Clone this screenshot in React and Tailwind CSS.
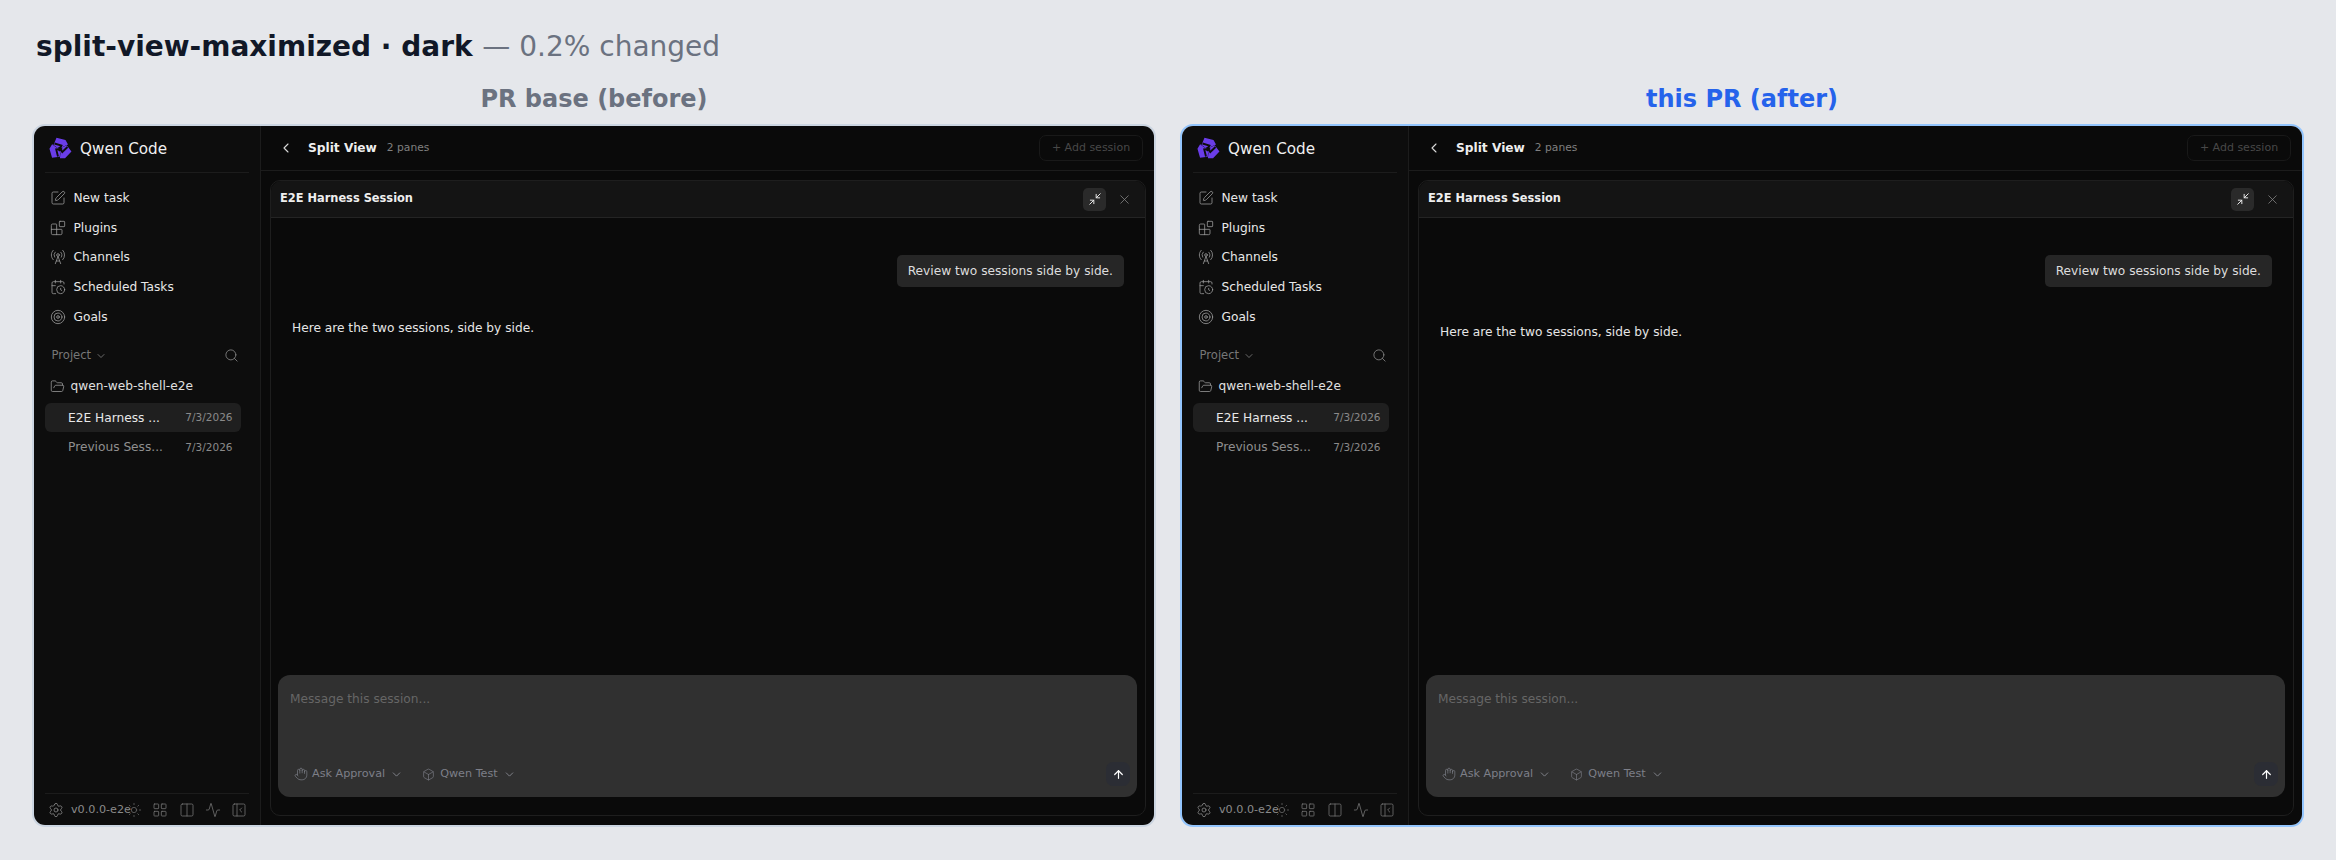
import {
  Activity,
  ArrowUp,
  Blocks,
  Box,
  CalendarClock,
  ChevronDown,
  ChevronLeft,
  Columns2,
  FolderOpen,
  Hand,
  LayoutGrid,
  Minimize2,
  PanelLeftClose,
  RadioTower,
  Search,
  Settings,
  SquarePen,
  Sun,
  Target,
  X,
} from "lucide-react";

const navItems = [
  { label: "New task", icon: SquarePen },
  { label: "Plugins", icon: Blocks },
  { label: "Channels", icon: RadioTower },
  { label: "Scheduled Tasks", icon: CalendarClock },
  { label: "Goals", icon: Target },
];

function Logo() {
  const blade = "M8.5 0.8 L17.5 3 L20 7.5 L15.5 9.5 L12 12.5 L5.5 8 Z";
  const slit = "M6.5 6.5 L13.5 8.5 L11 14";
  return (
    <svg viewBox="0 0 24 24" className="w-[24px] h-[24px]">
      {[0, 120, 240].map((deg) => (
        <path key={deg} d={blade} fill="#6a3de8" transform={`rotate(${deg} 12 12)`} />
      ))}
      {[0, 120, 240].map((deg) => (
        <path key={deg} d={slit} fill="none" stroke="#0d0d0d" strokeWidth="1.9" transform={`rotate(${deg} 12 12)`} />
      ))}
    </svg>
  );
}

function Sidebar() {
  return (
    <aside className="w-[227px] shrink-0 flex flex-col bg-[#0d0d0d] border-r border-[#1c1c1c]">
      <div className="mx-[11px] h-[47px] flex items-center gap-[8px] pl-[3px] border-b border-[#1c1c1c]">
        <Logo />
        <span className="text-[15.2px] text-[#f0f0f0]">Qwen Code</span>
      </div>
      <nav className="mt-[10px] flex flex-col">
        {navItems.map(({ label, icon: Icon }) => (
          <div key={label} className="h-[29.8px] flex items-center gap-[7.5px] pl-[16px] text-[12.2px] text-[#e8e8e8]">
            <Icon size={16} strokeWidth={1.2} className="text-[#9a9a9a]" />
            <span>{label}</span>
          </div>
        ))}
      </nav>
      <div className="mt-[12px] h-[24px] flex items-center justify-between pl-[17.5px] pr-[21px] text-[11.6px] text-[#777777]">
        <span className="flex items-center gap-[4px]">
          Project <ChevronDown size={12} strokeWidth={1.5} className="text-[#8a8a8a]" />
        </span>
        <Search size={15} strokeWidth={1.3} className="text-[#8a8a8a]" />
      </div>
      <div className="mt-[6.5px] h-[24px] flex items-center gap-[5.5px] pl-[16px] text-[12.2px] text-[#e0e0e0]">
        <FolderOpen size={15} strokeWidth={1.2} className="text-[#a0a0a0]" />
        <span>qwen-web-shell-e2e</span>
      </div>
      <div className="mt-[5px] mx-[11px] w-[196px] h-[29px] rounded-[6px] bg-[#1f1f1f] flex items-center justify-between pl-[23px] pr-[8.5px]">
        <span className="text-[12.2px] text-[#e8e8e8]">E2E Harness ...</span>
        <span className="text-[10.5px] text-[#8a8a8a]">7/3/2026</span>
      </div>
      <div className="mx-[11px] w-[196px] h-[30px] flex items-center justify-between pl-[23px] pr-[8.5px]">
        <span className="text-[12.2px] text-[#8f8f8f]">Previous Sess...</span>
        <span className="text-[10.5px] text-[#8a8a8a]">7/3/2026</span>
      </div>
      <div className="mt-auto mx-[11px] h-[32px] flex items-center border-t border-[#1c1c1c] pl-[3px] text-[#757575]">
        <Settings size={16} strokeWidth={1.2} className="text-[#8a8a8a]" />
        <span className="ml-[7px] w-[59px] pt-[2px] whitespace-nowrap text-[11.2px] text-[#8a8a8a]">v0.0.0-e2e</span>
        <Sun size={16} strokeWidth={1} className="ml-[-4px] text-[#777777]" />
        <LayoutGrid size={16} strokeWidth={1.2} className="ml-[10px]" />
        <Columns2 size={16} strokeWidth={1.2} className="ml-[11px]" />
        <Activity size={16} strokeWidth={1.2} className="ml-[10px]" />
        <PanelLeftClose size={16} strokeWidth={1.2} className="ml-[10px]" />
      </div>
    </aside>
  );
}

function Composer() {
  return (
    <div className="ml-[7px] mr-[8px] mb-[18px] h-[122px] rounded-[12px] bg-[#303030] flex flex-col pl-[12px] pr-[7px]">
      <div className="mt-[16px] text-[12.2px] leading-[16px] text-[#666666]">Message this session...</div>
      <div className="mt-auto mb-[11px] flex items-center text-[11.2px] text-[#7d7f88]">
        <Hand size={14} strokeWidth={1.2} className="ml-[4px]" />
        <span className="ml-[4px]">Ask Approval</span>
        <ChevronDown size={13} strokeWidth={1.6} className="ml-[5px] text-[#8a8c94]" />
        <Box size={13} strokeWidth={1.2} className="ml-[19px]" />
        <span className="ml-[5px]">Qwen Test</span>
        <ChevronDown size={13} strokeWidth={1.6} className="ml-[5px] text-[#8a8c94]" />
        <div className="ml-auto w-[24px] h-[24px] rounded-[7px] bg-[#2b2d34] flex items-center justify-center">
          <ArrowUp size={13} strokeWidth={2.2} className="text-white" />
        </div>
      </div>
    </div>
  );
}

function Panel({ after }) {
  return (
    <div className={`h-[703px] rounded-[13px] border-2 overflow-hidden flex ${after ? "border-[#93c5fd]" : "border-[#cbd5e1]"}`}>
      <Sidebar />
      <main className="flex-1 min-w-0 flex flex-col bg-[#0a0a0a]">
        <header className="h-[45px] shrink-0 flex items-center pl-[17px] pr-[11px] border-b border-[#1c1c1c]">
          <ChevronLeft size={16} strokeWidth={1.6} className="text-[#d8d8d8]" />
          <span className="ml-[14px] text-[12.2px] font-bold text-[#eeeeee]">Split View</span>
          <span className="ml-[10px] text-[10.7px] text-[#808080]">2 panes</span>
          <div className="ml-auto w-[104px] h-[26px] rounded-[7px] border border-[#191919] flex items-center justify-center text-[11px] text-[#484848]">
            + Add session
          </div>
        </header>
        <section className="mt-[9px] ml-[9px] mr-[8px] mb-[9px] flex-1 min-h-0 flex flex-col rounded-[10px] border border-[#1e1e1e]">
          <div className="h-[37px] shrink-0 flex items-center pl-[9px] pr-[13px] bg-[#141414] rounded-t-[10px] border-b border-[#242424]">
            <span className="text-[11.4px] font-bold text-[#eeeeee]">E2E Harness Session</span>
            <div className="ml-auto w-[23px] h-[23px] rounded-[5px] bg-[#2a2a2a] flex items-center justify-center">
              <Minimize2 size={14} strokeWidth={1.7} className="text-[#e8e8e8]" />
            </div>
            <X size={15} strokeWidth={1.2} className="ml-[11px] text-[#8a8a8a]" />
          </div>
          <div className="flex-1 min-h-0 flex flex-col pt-[37px]">
            <div className="self-end mr-[21px] h-[32px] rounded-[5px] bg-[#262626] px-[11px] flex items-center text-[12.2px] text-[#dddddd]">
              Review two sessions side by side.
            </div>
            <p className={`ml-[21px] text-[12.2px] leading-[18px] text-[#e6e6e6] ${after ? "mt-[36px]" : "mt-[32px]"}`}>
              Here are the two sessions, side by side.
            </p>
          </div>
          <Composer />
        </section>
      </main>
    </div>
  );
}

export default function App() {
  return (
    <div className="w-[2336px] h-[860px] bg-[#e5e7eb] px-[32px] pt-[28px] font-['DejaVu_Sans',sans-serif]">
      <h1 className="pl-[4px] text-[28px] leading-[38px] font-bold text-[#111827]">
        split-view-maximized · dark <span className="font-normal text-[#6b7280]">— 0.2% changed</span>
      </h1>
      <div className="mt-[18px] grid grid-cols-2 gap-[24px]">
        <div>
          <h2 className="h-[33px] text-center text-[24px] leading-[30px] font-bold text-[#6b7280]">PR base (before)</h2>
          <div className="mt-[7px]"><Panel /></div>
        </div>
        <div>
          <h2 className="h-[33px] text-center text-[24px] leading-[30px] font-bold text-[#2563eb]">this PR (after)</h2>
          <div className="mt-[7px]"><Panel after /></div>
        </div>
      </div>
    </div>
  );
}
